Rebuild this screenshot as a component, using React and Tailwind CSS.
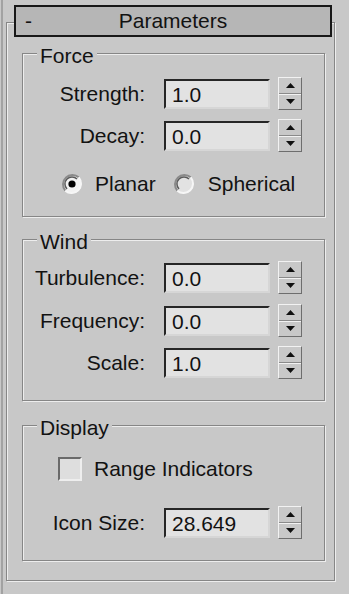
import React from 'react';

const Spinner = () => (
  <div className="ml-[8px] -mt-[2px] flex h-[33px] w-[24px] flex-col self-start border border-l-[#f2f2f2] border-t-[#f2f2f2] border-r-[#6e6e6e] border-b-[#6e6e6e] bg-[#c8c8c8]">
    <div className="flex flex-1 items-center justify-center border-b border-[#8a8a8a]">
      <svg width="9" height="5" viewBox="0 0 9 5">
        <path d="M4.5 0 L9 5 L0 5 Z" fill="#101010" />
      </svg>
    </div>
    <div className="flex flex-1 items-center justify-center border-t border-[#f2f2f2]">
      <svg width="9" height="5" viewBox="0 0 9 5">
        <path d="M0 0 L9 0 L4.5 5 Z" fill="#101010" />
      </svg>
    </div>
  </div>
);

const Field = ({ label, value, className = '' }) => (
  <div className={`flex h-[30px] items-center ${className}`}>
    <span className="w-[122px] text-right">{label}</span>
    <div className="ml-[19px] flex h-[30px] w-[106px] items-center border-2 border-l-[#262626] border-t-[#262626] border-r-[#d6d6d6] border-b-[#d6d6d6] bg-[#e2e2e2] pl-[6px] leading-none">
      {value}
    </div>
    <Spinner />
  </div>
);

const Radio = ({ checked }) => (
  <svg width="22" height="22" viewBox="0 0 22 22" className="shrink-0">
    <circle cx="11" cy="11" r="9.5" fill={checked ? '#f2f2f2' : '#e2e2e2'} />
    <path d="M4.3 17.7 A9.5 9.5 0 0 1 17.7 4.3" stroke="#8a8a8a" strokeWidth="2" fill="none" />
    <path d="M17.7 4.3 A9.5 9.5 0 0 1 4.3 17.7" stroke="#f6f6f6" strokeWidth="2" fill="none" />
    <path d="M6 16 A7 7 0 0 1 16 6" stroke="#5a5a5a" strokeWidth="1.5" fill="none" />
    {checked && <circle cx="11" cy="11" r="3.6" fill="#000" />}
  </svg>
);

const Group = ({ title, className = '', children }) => (
  <div className={`ml-[15px] w-[303px] border border-[#868686] shadow-[inset_1px_1px_0_#ededed,1px_1px_0_#ededed] ${className}`}>
    <div className="-mt-[10px] ml-[14px] h-[24px] w-fit bg-[#c8c8c8] px-[3px] leading-[24px]">{title}</div>
    {children}
  </div>
);

export default function App() {
  return (
    <div className="flex h-[594px] w-[349px] bg-[#c8c8c8] font-['Liberation_Sans',Arial,sans-serif] text-[21px] text-[#121212]">
      <div className="ml-px w-[2px] bg-[#a2a2a2]" />
      <div className="ml-[3px] mt-[22px] h-[559px] w-[329px] border border-[#868686] shadow-[inset_1px_1px_0_#ededed,1px_1px_0_#ededed]">
        <div className="-mt-[18px] ml-[7px] flex h-[32px] w-[318px] items-center border-2 border-[#181818] bg-[#b6b6b6] leading-[28px]">
          <span className="w-[30px] pl-[9px]">-</span>
          <span className="flex-1 text-center">Parameters</span>
          <span className="w-[30px]" />
        </div>

        <Group title="Force" className="mt-[16px] h-[164px]">
          <Field label="Strength:" value="1.0" className="mt-[11px]" />
          <Field label="Decay:" value="0.0" className="mt-[12px]" />
          <div className="mt-[21px] flex h-[24px] items-center pl-[38px]">
            <Radio checked />
            <span className="ml-[12px]">Planar</span>
            <span className="ml-[17px]"><Radio /></span>
            <span className="ml-[13px]">Spherical</span>
          </div>
        </Group>

        <Group title="Wind" className="mt-[22px] h-[162px]">
          <Field label="Turbulence:" value="0.0" className="mt-[9px]" />
          <Field label="Frequency:" value="0.0" className="mt-[13px]" />
          <Field label="Scale:" value="1.0" className="mt-[12px]" />
        </Group>

        <Group title="Display" className="mt-[24px] h-[136px]">
          <div className="mt-[17px] flex h-[24px] items-center pl-[35px]">
            <span className="h-[24px] w-[24px] border-2 border-l-[#6a6a6a] border-t-[#6a6a6a] border-r-[#eeeeee] border-b-[#eeeeee] bg-[#dedede]" />
            <span className="ml-[12px]">Range Indicators</span>
          </div>
          <Field label="Icon Size:" value="28.649" className="mt-[27px]" />
        </Group>
      </div>
    </div>
  );
}
